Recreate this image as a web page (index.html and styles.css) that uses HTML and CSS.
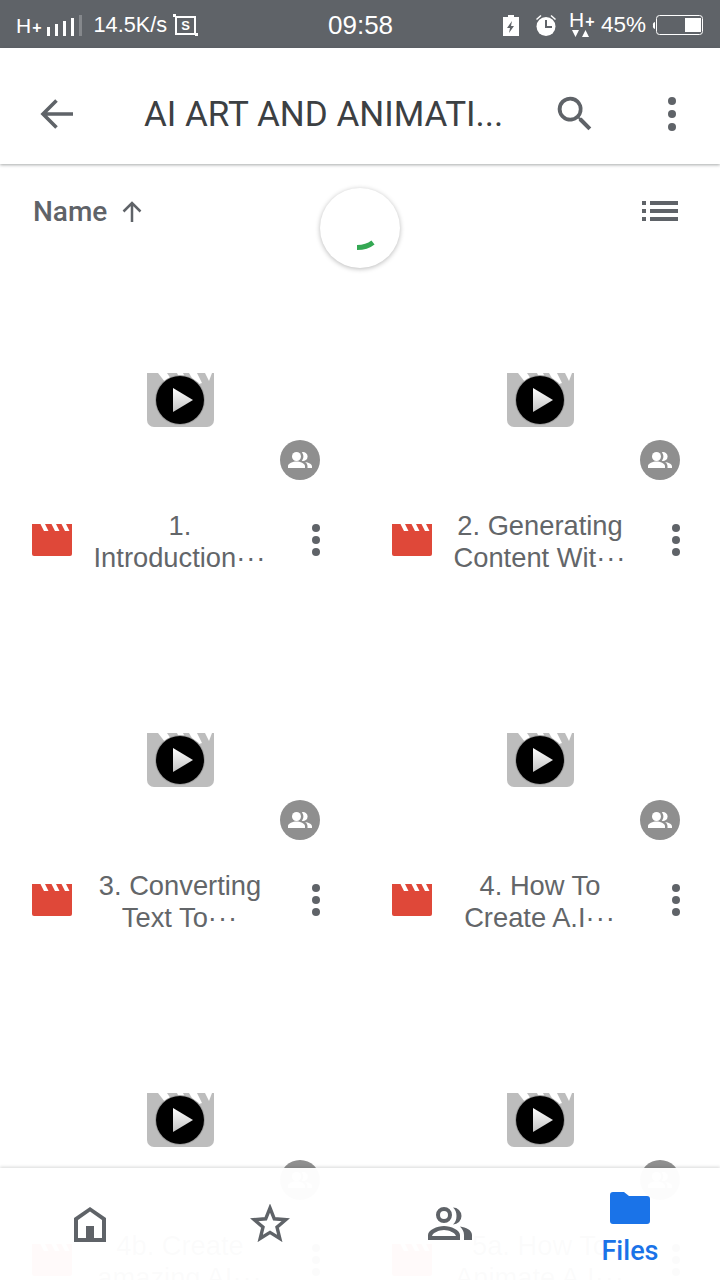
FILE: index.html
```html
<!DOCTYPE html>
<html lang="en">
<head>
<meta charset="utf-8">
<title>AI ART AND ANIMATION</title>
<link rel="stylesheet" href="styles.css">
</head>
<body>
<svg class="defs" width="0" height="0" aria-hidden="true">
  <defs>
    <linearGradient id="playgrad" x1="0" y1="0" x2="0" y2="1">
      <stop offset="0" stop-color="#ffffff"/>
      <stop offset="1" stop-color="#c4c4c4"/>
    </linearGradient>
    <symbol id="thumb" viewBox="0 0 67 54">
      <path d="M0 0H67V47a7 7 0 0 1-7 7H7a7 7 0 0 1-7-7Z" fill="#bdbdbd"/>
      <path d="M11 0h9l6 9h-8ZM30 0h6l2 4h-6ZM42 0h8l5 10-6 2ZM58 0h7l-3 8Z" fill="#fff"/>
      <circle cx="33" cy="27" r="25" fill="#a0a0a0"/>
      <circle cx="33" cy="27" r="24" fill="#000"/>
      <path d="M26 15 46 27 26 39Z" fill="url(#playgrad)"/>
    </symbol>
    <symbol id="people" viewBox="0 0 24 24">
      <circle cx="8.500" cy="8.500" r="4.500" fill="#fff"/>
      <path d="M0 20v-2c0-2.500 5-4.500 8.500-4.500s8.500 2 8.500 4.500v2ZM13.800 4.200a4.500 4.500 0 1 1 0 8.600c1-1.200 1.600-2.700 1.600-4.300s-.6-3.100-1.600-4.300ZM17 14c3.500.5 7 2 7 4.500V20h-4.500v-2c0-1.500-1-3-2.500-4Z" fill="#fff"/>
    </symbol>
    <symbol id="clap" viewBox="0 0 40 32">
      <path d="M0 0H40V30a2 2 0 0 1-2 2H2a2 2 0 0 1-2-2Z" fill="#df4839"/>
      <path d="M8.500 0h4.500l3.500 7h-4.500ZM19.500 0h4.500l3.500 7h-4.500ZM29.500 0h4.500l3.500 7h-4.500Z" fill="#fff"/>
    </symbol>
  </defs>
</svg>

<div class="screen">
  <header class="status">
    <div class="status-side">
      <span class="net">H<small>+</small></span>
      <svg class="signal" width="35" height="21" viewBox="0 0 35 21"><path d="M0 12h3v9H0ZM8 9h3v12H8ZM16 6h3v15h-3ZM24 3h3v18h-3Z" fill="#fff"/><path d="M32 0h3v21h-3Z" fill="#85888c"/></svg>
      <span class="speed">14.5K/s</span>
      <svg class="shot" width="25" height="22" viewBox="0 0 25 22"><path d="M3 3h19v17H3Z" fill="none" stroke="#fff" stroke-width="2"/><path d="M0 0h3v3H0ZM22 19h3v3h-3Z" fill="#fff"/><text x="12.500" y="16" class="shot-s">S</text></svg>
    </div>
    <span class="clock">09:58</span>
    <div class="status-side status-right">
      <svg width="16" height="21" viewBox="0 0 16 21"><path d="M5 0h6v2h5v19H0V2h5Z" fill="#fff"/><path d="M9 6 4 13h3l-1 5 5-7H8Z" fill="#5f6368"/></svg>
      <svg class="alarm" width="22" height="22" viewBox="0 0 22 22"><circle cx="11" cy="12.500" r="9.500" fill="#fff"/><path d="M10 6h2v6h5v2h-7Z" fill="#5f6368"/><path d="M1 5 5.500 1l1 1L2 6ZM21 5l-4.500-4-1 1L20 6Z" fill="#fff"/></svg>
      <span class="net net-arrows">H<small>+</small><svg class="arrows" width="20" height="7" viewBox="0 0 20 7"><path d="M0 0h7L3.500 7ZM10 7l3.500-7L17 7Z" fill="#fff"/></svg></span>
      <span class="pct">45%</span>
      <svg class="battery" width="52" height="20" viewBox="0 0 52 20"><path d="M3 7v7a3 3 0 0 1-2-3.500A3 3 0 0 1 3 7Z" fill="#fff"/><rect x="4.500" y=".5" width="46" height="19" rx="3" fill="none" stroke="#fff"/><rect x="33" y="3" width="16" height="14" fill="#fff"/></svg>
    </div>
  </header>

  <div class="appbar">
    <svg class="icon-back" width="36" height="36" viewBox="0 0 36 36"><path d="M35 18H5M18.500 4.500 5 18l13.500 13.500" fill="none" stroke="#5f6368" stroke-width="3.600"/></svg>
    <h1 class="title">AI ART AND ANIMATI...</h1>
    <svg class="icon-search" width="46" height="46" viewBox="0 0 24 24"><path d="M15.500 14h-.8l-.3-.3A6.500 6.500 0 1 0 13.700 14.400l.3.300v.8l5 5 1.500-1.500ZM9.500 14a4.500 4.500 0 1 1 0-9 4.500 4.500 0 0 1 0 9Z" fill="#5f6368"/></svg>
    <svg class="kebab-top" width="10" height="34" viewBox="0 0 10 34"><circle cx="5" cy="4" r="4" fill="#5f6368"/><circle cx="5" cy="17" r="4" fill="#5f6368"/><circle cx="5" cy="30" r="4" fill="#5f6368"/></svg>
  </div>

  <div class="sortbar">
    <span class="sort-name">Name</span>
    <svg width="24" height="24" viewBox="0 0 24 24"><path d="M12 23V4M3.500 12.500 12 4l8.500 8.500" fill="none" stroke="#5f6368" stroke-width="2.500"/></svg>
    <svg class="listview" width="36" height="20" viewBox="0 0 36 20"><path d="M0 0h4v4H0ZM8 0h28v4H8ZM0 8h4v4H0ZM8 8h28v4H8ZM0 16h4v4H0ZM8 16h28v4H8Z" fill="#5f6368"/></svg>
  </div>

  <div class="spinner">
    <svg width="24" height="16" viewBox="0 0 24 16"><path d="M2 12.500c6 0 11-1 16-5" fill="none" stroke="#34a853" stroke-width="5"/></svg>
  </div>

  <main class="grid">
    <article class="card">
      <div class="thumb"><svg class="thumb-icon"><use href="#thumb"/></svg><span class="badge"><svg width="24" height="24"><use href="#people"/></svg></span></div>
      <div class="meta"><svg class="clap"><use href="#clap"/></svg><p class="name">1.<br>Introduction<span class="more">···</span></p><span class="dots"><i></i><i></i><i></i></span></div>
    </article>
    <article class="card">
      <div class="thumb"><svg class="thumb-icon"><use href="#thumb"/></svg><span class="badge"><svg width="24" height="24"><use href="#people"/></svg></span></div>
      <div class="meta"><svg class="clap"><use href="#clap"/></svg><p class="name">2. Generating<br>Content Wit<span class="more">···</span></p><span class="dots"><i></i><i></i><i></i></span></div>
    </article>
    <article class="card">
      <div class="thumb"><svg class="thumb-icon"><use href="#thumb"/></svg><span class="badge"><svg width="24" height="24"><use href="#people"/></svg></span></div>
      <div class="meta"><svg class="clap"><use href="#clap"/></svg><p class="name">3. Converting<br>Text To<span class="more">···</span></p><span class="dots"><i></i><i></i><i></i></span></div>
    </article>
    <article class="card">
      <div class="thumb"><svg class="thumb-icon"><use href="#thumb"/></svg><span class="badge"><svg width="24" height="24"><use href="#people"/></svg></span></div>
      <div class="meta"><svg class="clap"><use href="#clap"/></svg><p class="name">4. How To<br>Create A.I<span class="more">···</span></p><span class="dots"><i></i><i></i><i></i></span></div>
    </article>
    <article class="card">
      <div class="thumb"><svg class="thumb-icon"><use href="#thumb"/></svg><span class="badge"><svg width="24" height="24"><use href="#people"/></svg></span></div>
      <div class="meta"><svg class="clap"><use href="#clap"/></svg><p class="name">4b. Create<br>amazing AI<span class="more">···</span></p><span class="dots"><i></i><i></i><i></i></span></div>
    </article>
    <article class="card">
      <div class="thumb"><svg class="thumb-icon"><use href="#thumb"/></svg><span class="badge"><svg width="24" height="24"><use href="#people"/></svg></span></div>
      <div class="meta"><svg class="clap"><use href="#clap"/></svg><p class="name">5a. How To<br>Animate A.I<span class="more">···</span></p><span class="dots"><i></i><i></i><i></i></span></div>
    </article>
  </main>

  <nav class="bottomnav">
    <div class="tab">
      <svg width="32" height="35" viewBox="0 0 32 35"><path d="M16 0 32 11V35H0V11ZM16 4.500 4 13V31H12V19H20V31H28V13Z" fill="#5f6368" fill-rule="evenodd"/></svg>
    </div>
    <div class="tab tab-star">
      <svg width="40" height="38" viewBox="0 0 40 38"><path d="M20 4 24.300 14.800 35.800 15.700 27 23.200 29.800 34.500 20 28.400 10.200 34.500 13 23.200 4.200 15.700 15.700 14.800Z" fill="none" stroke="#5f6368" stroke-width="3.400"/></svg>
    </div>
    <div class="tab">
      <svg width="44" height="33" viewBox="0 0 44 33"><path d="M16 0a8 8 0 1 1 0 16 8 8 0 0 1 0-16Zm0 4a4 4 0 1 0 0 8 4 4 0 0 0 0-8ZM0 33v-5c0-5 9-9 16-9s16 4 16 9v5ZM4 29h24c-.5-3-7-6-12-6S4.500 26 4 29Z" fill="#5f6368" fill-rule="evenodd"/><path d="M25 .5a8.500 8.500 0 0 1 0 17c2.500-2 3.500-5 3.500-8.500S27.500 2.500 25 .5ZM32 19.500c6 .8 12 3.500 12 8.500v5h-8v-5c0-3.500-1.500-6-4-8.500Z" fill="#5f6368"/></svg>
    </div>
    <div class="tab tab-active">
      <svg width="40" height="32" viewBox="0 0 40 32"><path d="M3 0h11l5 4h18a3 3 0 0 1 3 3v22a3 3 0 0 1-3 3H3a3 3 0 0 1-3-3V3a3 3 0 0 1 3-3Z" fill="#1a73e8"/></svg>
      <span class="tab-label">Files</span>
    </div>
  </nav>
</div>
</body>
</html>
```

FILE: styles.css
```css
* { box-sizing: border-box; }

html, body {
  margin: 0;
  padding: 0;
  background: #fff;
}

.defs { display: block; height: 0; }

.screen {
  position: relative;
  width: 720px;
  height: 1280px;
  overflow: hidden;
  font-family: Roboto, "Liberation Sans", sans-serif;
  color: #5f6368;
}

.status {
  height: 48px;
  padding: 2px 16px 0;
  background: #5f6368;
  color: #fff;
  display: flex;
  align-items: center;
  justify-content: space-between;
  font-family: "Liberation Sans", sans-serif;
}

.status-side { display: flex; align-items: center; width: 304px; }
.status-right { justify-content: flex-end; }
.status-right > svg:first-child { margin-right: 16px; }

.net { font-size: 21px; display: inline-block; position: relative; line-height: 1; }
.net small { font-size: 16px; font-weight: bold; margin-left: 1px; }
.signal { margin-left: 5px; margin-top: 1px; }
.speed { margin-left: 12px; font-size: 21.700px; }
.shot { margin-left: 6px; margin-top: -1px; }
.shot-s { font: bold 13px "Liberation Sans", sans-serif; fill: #fff; text-anchor: middle; }
.clock { font-size: 26px; position: absolute; left: 328px; }
.alarm { margin-right: 12px; }
.net-arrows { height: 30px; width: 24px; margin-right: 8px; margin-top: -2px; }
.arrows { position: absolute; left: 3px; top: 21px; }
.pct { font-size: 22.500px; }
.battery { margin-left: 6px; }

.appbar {
  height: 116px;
  padding: 16px 0 0 38px;
  display: flex;
  align-items: center;
  background: #fff;
  box-shadow: 0 1px 3px rgba(60, 64, 67, .45);
  position: relative;
}

.title {
  margin: 0 0 0 70px;
  width: 376px;
  font-size: 35px;
  font-weight: 400;
  white-space: nowrap;
  color: #3c4043;
  font-family: Roboto, sans-serif;
}

.icon-search { margin-left: 32px; }
.kebab-top { margin-left: 69px; }

.sortbar {
  height: 94px;
  padding: 0 42px 0 33px;
  display: flex;
  align-items: center;
  gap: 13px;
}

.sort-name { font-size: 28px; font-weight: 500; }
.listview { margin-left: auto; }

.spinner {
  position: absolute;
  left: 320px;
  top: 188px;
  width: 80px;
  height: 80px;
  border-radius: 50%;
  background: #fff;
  box-shadow: 0 1px 5px rgba(0, 0, 0, .28);
  display: flex;
  justify-content: center;
  align-items: flex-start;
  padding: 47px 0 0 14px;
}

.grid {
  display: grid;
  grid-template-columns: 360px 360px;
  grid-auto-rows: 360px;
  padding-top: 22px;
}

.card { display: flex; flex-direction: column; }

.thumb {
  height: 220px;
  position: relative;
  display: flex;
  justify-content: center;
  padding-top: 93px;
}

.thumb-icon { width: 67px; height: 54px; }

.badge {
  position: absolute;
  left: 280px;
  top: 160px;
  width: 40px;
  height: 40px;
  border-radius: 50%;
  background: #8f8f8f;
  display: flex;
  align-items: center;
  justify-content: center;
}

.meta {
  height: 80px;
  padding: 0 40px 0 32px;
  display: flex;
  align-items: center;
}

.clap { width: 40px; height: 32px; flex: none; }

.name {
  flex: 1;
  margin: 0;
  padding: 4px 24px 0 0;
  text-align: center;
  font-family: "Liberation Sans", sans-serif;
  font-size: 27.300px;
  line-height: 32px;
  white-space: nowrap;
  color: #636669;
}

.more { letter-spacing: 1px; }

.dots { display: flex; flex-direction: column; gap: 4px; flex: none; width: 8px; }
.dots i { width: 8px; height: 8px; border-radius: 50%; background: #5f6368; }

.bottomnav {
  position: absolute;
  left: 0;
  right: 0;
  top: 1168px;
  height: 112px;
  background: rgba(255, 255, 255, .975);
  box-shadow: 0 -1px 3px rgba(60, 64, 67, .2);
  display: grid;
  grid-template-columns: 180px 180px 180px 180px;
}

.tab {
  display: flex;
  flex-direction: column;
  align-items: center;
  justify-content: flex-start;
  padding-top: 39px;
}

.tab-star { padding-top: 36px; }
.tab-active { padding-top: 24px; }
.tab-label { font-size: 27px; font-weight: 500; color: #1a73e8; line-height: 32px; margin-top: 11px; }
```
